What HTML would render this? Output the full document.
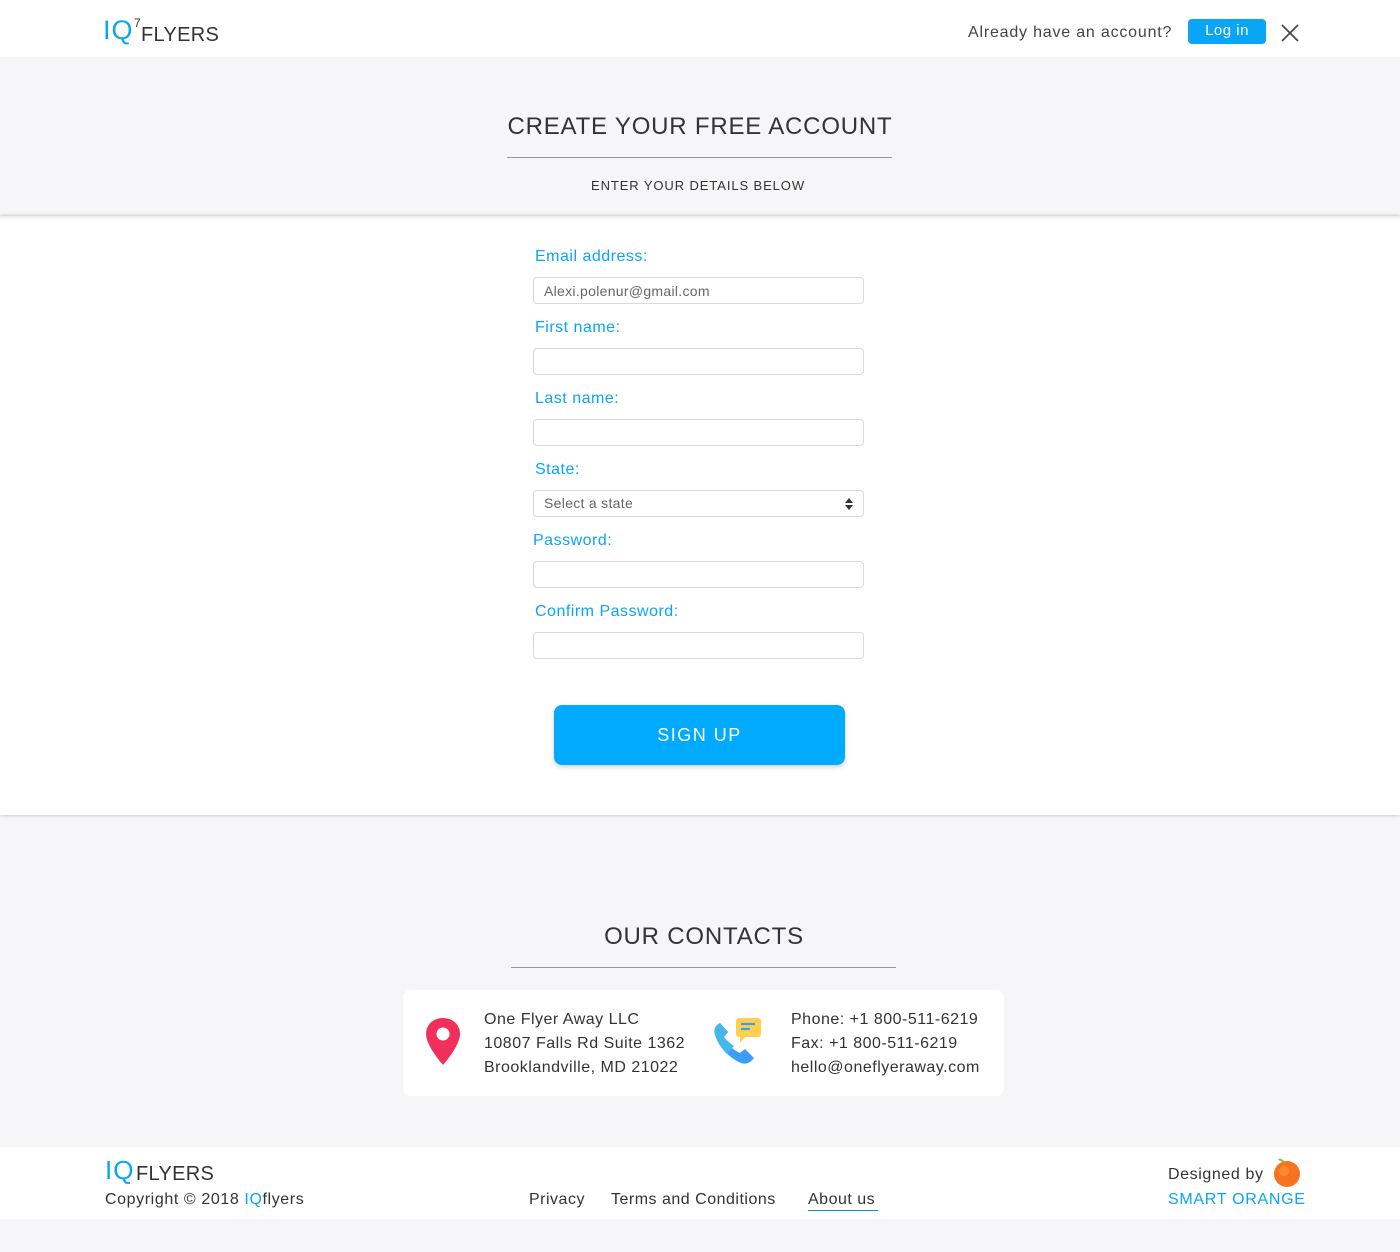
<!DOCTYPE html>
<html><head><meta charset="utf-8"><style>
*{margin:0;padding:0;box-sizing:border-box}
body{width:1400px;height:1252px;background:#f6f6f8;font-family:"Liberation Sans",sans-serif;color:#333;position:relative;overflow:hidden}
.a{position:absolute;white-space:nowrap}
.blue{color:#0aa5f5}
.lbl{position:absolute;left:535px;font-size:16px;color:#0aa5f5;letter-spacing:.5px}
.inp{position:absolute;left:533px;width:331px;height:27px;border:1px solid #d9d9d9;border-radius:4px;background:#fff;font-size:14px;color:#666;padding:5px 10px;letter-spacing:.3px}
</style></head><body>
<div class="a" style="left:0;top:0;width:1400px;height:57px;background:#fff"></div>
<div class="a" style="left:103px;top:15px;font-size:27px;color:#0aa5f5;letter-spacing:1px">IQ</div>
<div class="a" style="left:134px;top:16px;font-size:12px;color:#333">7</div>
<div class="a" style="left:141px;top:24px;font-size:20px;color:#333;letter-spacing:.3px">FLYERS</div>
<div class="a" style="left:968px;top:24px;font-size:16px;color:#444;letter-spacing:.8px">Already have an account?</div>
<div class="a" style="left:1188px;top:19px;width:78px;height:25px;background:#0aa5f5;border-radius:4px;color:#fff;font-size:15px;text-align:center;line-height:24px;letter-spacing:.5px">Log in</div>
<svg class="a" style="left:1281px;top:24px" width="18" height="18"><path d="M1 1L17 17M17 1L1 17" stroke="#444" stroke-width="1.6"/></svg>

<div class="a" style="left:0;top:113px;width:1400px;text-align:center;font-size:24px;color:#333;letter-spacing:.8px">CREATE YOUR FREE ACCOUNT</div>
<div class="a" style="left:507px;top:157px;width:385px;height:1px;background:#999"></div>
<div class="a" style="left:0;top:178px;width:1396px;text-align:center;font-size:13px;color:#333;letter-spacing:.9px">ENTER YOUR DETAILS BELOW</div>

<div class="a" style="left:0;top:216px;width:1400px;height:599px;background:#fff;box-shadow:0 -1px 3px rgba(0,0,0,.15),0 1px 3px rgba(0,0,0,.12)"></div>
<div class="a" style="left:0;top:216px;width:1400px;height:4px;background:linear-gradient(rgba(0,0,0,.08),rgba(0,0,0,0))"></div>
<div class="lbl" style="top:248px">Email address:</div>
<div class="inp" style="top:277px">Alexi.polenur@gmail.com</div>
<div class="lbl" style="top:319px">First name:</div>
<div class="inp" style="top:348px"></div>
<div class="lbl" style="top:390px">Last name:</div>
<div class="inp" style="top:419px"></div>
<div class="lbl" style="top:461px">State:</div>
<div class="inp" style="top:490px;padding-top:4px">Select a state<svg style="position:absolute;right:10px;top:6px" width="8" height="14"><path d="M0 6L4 1L8 6ZM0 8L4 13L8 8Z" fill="#333"/></svg></div>
<div class="lbl" style="top:532px;left:533px">Password:</div>
<div class="inp" style="top:561px"></div>
<div class="lbl" style="top:603px">Confirm Password:</div>
<div class="inp" style="top:632px"></div>
<div class="a" style="left:554px;top:705px;width:291px;height:60px;background:#00aaff;border-radius:8px;box-shadow:0 2px 5px rgba(0,0,0,.2);color:#fff;font-size:18px;text-align:center;line-height:61px;letter-spacing:1.5px">SIGN UP</div>

<div class="a" style="left:0;top:923px;width:1408px;text-align:center;font-size:24px;color:#333;letter-spacing:.8px">OUR CONTACTS</div>
<div class="a" style="left:511px;top:967px;width:385px;height:1px;background:#999"></div>
<div class="a" style="left:403px;top:990px;width:601px;height:106px;background:#fff;border-radius:8px"></div>
<svg class="a" style="left:425px;top:1017px" width="36" height="50"><path d="M18 1C8 1 1 8 1 17C1 29 18 48 18 48C18 48 35 29 35 17C35 8 28 1 18 1Z" fill="#f0305a"/><circle cx="18" cy="17" r="6.5" fill="#fff"/></svg>
<div class="a" style="left:484px;top:1008px;font-size:16px;line-height:24px;color:#333;letter-spacing:.5px">One Flyer Away LLC<br>10807 Falls Rd Suite 1362<br>Brooklandville, MD 21022</div>
<svg class="a" style="left:712px;top:1016px" width="52" height="52"><path d="M8 7C4 9 1 13 3 19C7 31 16 41 29 47C35 49 39 46 42 42L33 33L28 37C21 34 15 28 12 21L16 16Z" fill="#3d9cf5"/><path d="M8 7C4 9 1 13 3 19C6 27 10 33 15 38L22 30C18 27 14 24 12 21L16 16Z" fill="#45b8ea"/><rect x="24" y="2" width="25" height="19" rx="3" fill="#ffd04d"/><path d="M28 20L28 27L34 20Z" fill="#ffd04d"/><path d="M29 8H43M29 13H38" stroke="#3d9cf5" stroke-width="2.2"/></svg>
<div class="a" style="left:791px;top:1008px;font-size:16px;line-height:24px;color:#333;letter-spacing:.5px">Phone: +1 800-511-6219<br>Fax: +1 800-511-6219<br>hello@oneflyeraway.com</div>

<div class="a" style="left:0;top:1147px;width:1400px;height:72px;background:#fff"></div>
<div class="a" style="left:105px;top:1155px;font-size:26px;color:#0aa5f5;letter-spacing:1px">IQ</div>
<div class="a" style="left:136px;top:1163px;font-size:20px;color:#333;letter-spacing:.3px">FLYERS</div>
<div class="a" style="left:105px;top:1191px;font-size:16px;color:#333;letter-spacing:.6px">Copyright © 2018 <span class="blue">IQ</span>flyers</div>
<div class="a" style="left:529px;top:1191px;font-size:16px;color:#333;letter-spacing:.5px">Privacy</div>
<div class="a" style="left:611px;top:1191px;font-size:16px;color:#333;letter-spacing:.5px">Terms and Conditions</div>
<div class="a" style="left:808px;top:1191px;font-size:16px;color:#333;letter-spacing:.5px">About us</div>
<div class="a" style="left:808px;top:1210px;width:70px;height:1px;background:#0a8fe0"></div>
<div class="a" style="left:1168px;top:1166px;font-size:16px;color:#333;letter-spacing:.6px">Designed by</div>
<svg class="a" style="left:1271px;top:1157px" width="32" height="32"><circle cx="16" cy="17" r="13" fill="#f8731f"/><circle cx="13" cy="14" r="5" fill="#fb9038" opacity=".8"/><path d="M14 5C12 2 9 1 7 2C9 5 12 5 14 5Z" fill="#8bc34a"/></svg>
<div class="a" style="left:1168px;top:1191px;font-size:16px;color:#0aa5f5;letter-spacing:.7px">SMART ORANGE</div>
</body></html>
